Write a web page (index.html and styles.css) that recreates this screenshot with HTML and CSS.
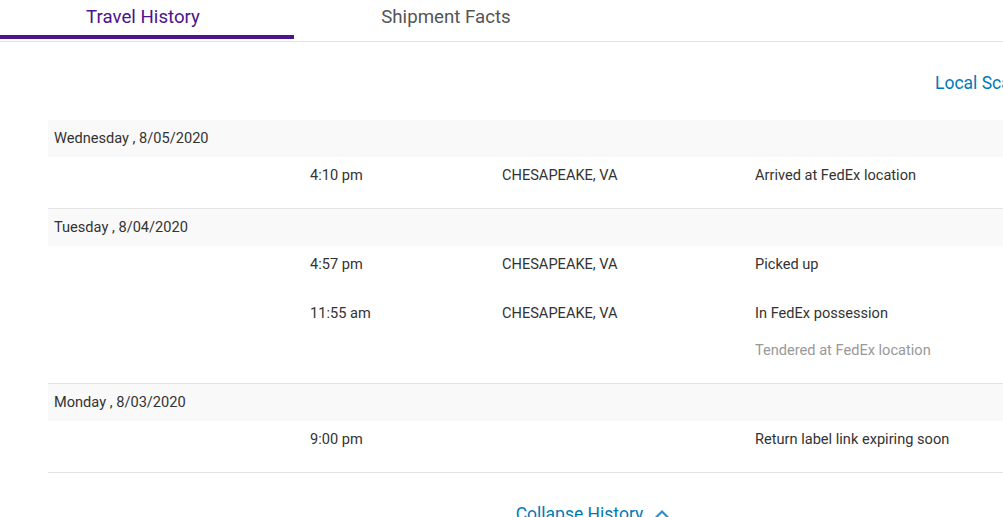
FILE: index.html
```html
<!DOCTYPE html>
<html>
<head>
<meta charset="utf-8">
<link rel="stylesheet" href="styles.css">
</head>
<body>
<div class="page">
  <div class="tabs">
    <div class="tab active">Travel History</div>
    <div class="tab second">Shipment Facts</div>
  </div>
  <div class="content">
    <div class="toolbar"><a class="link">Local Scan Time</a></div>
    <div class="history">
      <div class="day">Wednesday , 8/05/2020</div>
      <div class="group">
        <div class="event">
          <div></div><div>4:10 pm</div><div>CHESAPEAKE, VA</div>
          <div>Arrived at FedEx location</div>
        </div>
      </div>
      <div class="day">Tuesday , 8/04/2020</div>
      <div class="group">
        <div class="event">
          <div></div><div>4:57 pm</div><div>CHESAPEAKE, VA</div>
          <div>Picked up</div>
        </div>
        <div class="event">
          <div></div><div>11:55 am</div><div>CHESAPEAKE, VA</div>
          <div>In FedEx possession<div class="sub">Tendered at FedEx location</div></div>
        </div>
      </div>
      <div class="day">Monday , 8/03/2020</div>
      <div class="group">
        <div class="event">
          <div></div><div>9:00 pm</div><div></div>
          <div>Return label link expiring soon</div>
        </div>
      </div>
    </div>
    <div class="collapse">
      <a class="link">Collapse History</a>
      <svg class="chev" width="20" height="12" viewBox="0 0 20 12"><path d="M2 10.5 L10 2.5 L18 10.5" fill="none" stroke="#2f8fc8" stroke-width="2.2"/></svg>
    </div>
  </div>
</div>
</body>
</html>
```

FILE: styles.css
```css
html, body {
  margin: 0;
  padding: 0;
  background: #fff;
  overflow: hidden;
}
body {
  font-family: Roboto, "Liberation Sans", Arial, sans-serif;
  color: #333;
}
.page {
  width: 1188px;
}
.tabs {
  display: flex;
  border-bottom: 1px solid #e3e3e3;
  padding-bottom: 2px;
}
.tab {
  box-sizing: border-box;
  width: 294px;
  text-align: center;
  font-size: 18.7px;
  line-height: 22px;
  padding: 6px 8px 7px 0;
  color: #555;
  border-bottom: 4px solid transparent;
}
.tab.second {
  width: 304px;
  padding-right: 0;
}
.tab.active {
  color: #4d148c;
  border-bottom-color: #4d148c;
}
.content {
  margin: 0 48px;
}
.toolbar {
  display: flex;
  padding-left: 887px;
  margin-top: 30px;
  margin-bottom: 26px;
}
.link {
  color: #007ab7;
  font-size: 17.5px;
  line-height: 22px;
  white-space: nowrap;
  cursor: pointer;
}
.day {
  background: #f9f9f9;
  font-size: 14.6px;
  height: 37px;
  line-height: 37px;
  padding-left: 6px;
}
.group {
  padding-bottom: 2px;
  border-bottom: 1px solid #e3e3e3;
}
.event {
  display: grid;
  grid-template-columns: 262px 192px 253px 1fr;
  font-size: 14.6px;
  line-height: 18px;
  padding: 9px 0 22px;
}
.sub {
  color: #999;
  margin-top: 19px;
}
.collapse {
  display: flex;
  justify-content: center;
  align-items: center;
  gap: 9px;
  margin-top: 30px;
}
.chev {
  display: block;
  margin-top: 2px;
}
```
